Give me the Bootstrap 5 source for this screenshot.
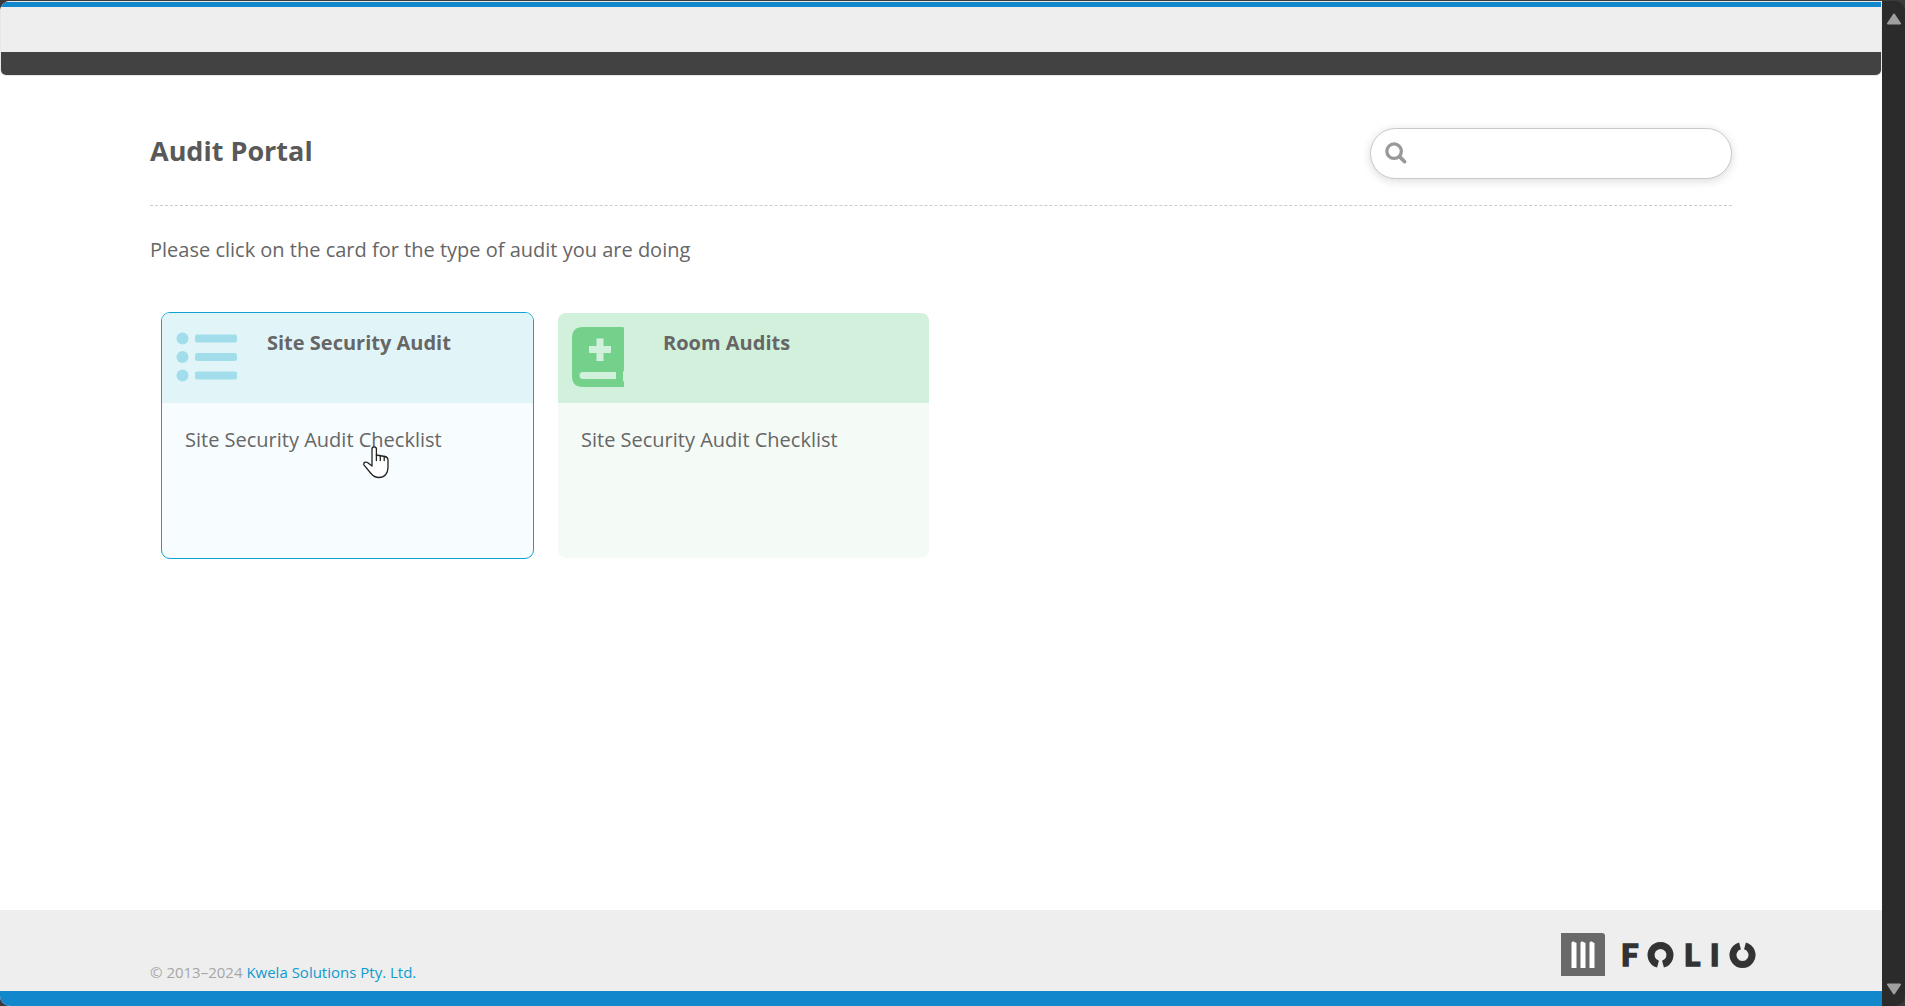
<!DOCTYPE html>
<html lang="en">
<head>
<meta charset="utf-8">
<meta name="viewport" content="width=device-width, initial-scale=1">
<title>Audit Portal</title>
<link href="https://cdn.jsdelivr.net/npm/bootstrap@5.3.0/dist/css/bootstrap.min.css" rel="stylesheet">
<style>
  body { font-family: "Open Sans", "Noto Sans", sans-serif; font-size: 20px; line-height: 30px; color: #666; background: #3a3a3c; }
  .app-window { border-radius: 10px; overflow: hidden; margin-top: 1px; min-height: calc(100vh - 1px); }
  .app-page { background: #fff; }
  .top-bar { border: 1px solid #e8e8e8; border-radius: 0 0 6px 6px; overflow: hidden; }
  .top-accent { height: 5px; background: #1287cc; }
  .top-brand { height: 45px; background: #eee; }
  .top-menu { height: 23px; background: #424242; }
  .gutter { padding-left: 150px; padding-right: 150px; }
  .portal-head { padding-top: 52px; padding-bottom: 26px; border-bottom: 1px dashed #ccc; }
  .portal-head h1 { font-size: 27px; line-height: 46px; color: #595959; }
  .search-pill { width: 362px; height: 51px; border: 1px solid #c8c8c8; border-radius: 26px; padding: 0 16px 2px 14px; box-shadow: 0 2px 10px rgba(0,0,0,.15); background: #fff; }
  .search-pill input { background: transparent; }
  .intro { margin: 29px 0 0; }
  .audit-grid { gap: 23px; padding: 47px 11px 0; }
  .audit-card { width: 373px; height: 247px; border: 1px solid transparent; border-radius: 9px; overflow: hidden; color: #666; background-clip: padding-box; }
  .audit-card.active { border-color: #0ea2d2; }
  .audit-head { height: 90px; padding: 14px 14px; }
  .audit-head h2 { font-size: 20px; line-height: 32px; color: #666; }
  .audit-icon { width: 91px; }
  .audit-text { padding: 22px 23px; }
  .tone-blue { background-color: #f7fcff; }
  .tone-blue .audit-head { background: #e1f5f9; }
  .tone-green { background-color: #f4fbf7; }
  .tone-green .audit-head { background: #d2f1dc; }
  .hand { position: absolute; left: 201px; top: 133px; }
  .foot { height: 81px; background: #eee; font-size: 15px; line-height: 22px; color: #a6a6a6; padding-bottom: 8px; }
  .foot a { color: #0d9bd0; text-decoration: none; }
  .foot-logo { margin-right: -24px; margin-bottom: 6px; }
  .foot-accent { height: 15px; background: #1287cc; }
  .scroll-track { width: 23px; background: #2b2b2b; padding: 12px 0 11px; }
</style>
<script src="https://cdn.jsdelivr.net/npm/bootstrap@5.3.0/dist/js/bootstrap.bundle.min.js"></script>
</head>
<body>
<div class="app-window d-flex">
  <div class="app-page d-flex flex-column flex-grow-1">
    <header class="top-bar">
      <div class="top-accent"></div>
      <div class="top-brand"></div>
      <div class="top-menu"></div>
    </header>
    <main class="gutter flex-grow-1">
      <div class="portal-head d-flex justify-content-between align-items-start">
        <h1 class="fw-bold mb-0">Audit Portal</h1>
        <label class="search-pill d-flex align-items-center gap-2">
          <svg width="24" height="24" viewBox="0 0 24 24" fill="none" stroke="#999" aria-hidden="true"><circle cx="10" cy="10" r="8" stroke-width="3.600"/><path d="M16 16 21.500 21.500" stroke-width="4" stroke-linecap="round"/></svg>
          <input type="search" class="form-control border-0 shadow-none p-0" aria-label="Search">
        </label>
      </div>
      <p class="intro">Please click on the card for the type of audit you are doing</p>
      <div class="audit-grid d-flex flex-wrap">
        <a href="#" class="audit-card active tone-blue text-decoration-none position-relative">
          <div class="audit-head d-flex">
            <div class="audit-icon flex-shrink-0">
              <svg width="62" height="62" viewBox="0 0 62 62" fill="#a2ddeb" aria-hidden="true"><circle cx="6.500" cy="11.500" r="6"/><circle cx="6.500" cy="30" r="6"/><circle cx="6.500" cy="48.500" r="6"/><rect x="19" y="7.500" width="42" height="8" rx="2"/><rect x="19" y="26" width="42" height="8" rx="2"/><rect x="19" y="44.500" width="42" height="8" rx="2"/></svg>
            </div>
            <h2 class="fw-bold mb-0">Site Security Audit</h2>
          </div>
          <div class="audit-text">Site Security Audit Checklist</div>
          <svg class="hand" width="26" height="33" viewBox="0 0 26 33" fill="#fff" stroke="#222" stroke-width="1.300" stroke-linejoin="round" stroke-linecap="round" aria-hidden="true"><path d="M9 20V3a2.200 2.200 0 0 1 4.400 0V9l8.500 1.500q3.100.7 3.100 3.500v7.500c0 6-3.500 10-9 10-3.500 0-6-1.500-8-4L.9 18.800C.2 16.500 2.500 15.500 4.500 16.500z"/><path fill="none" d="M13.400 9V14.500M17.300 9.700V14.500M21.200 10.500V14.500"/></svg>
        </a>
        <a href="#" class="audit-card tone-green text-decoration-none">
          <div class="audit-head d-flex">
            <div class="audit-icon flex-shrink-0">
              <svg width="54" height="62" viewBox="0 0 54 62" aria-hidden="true"><path fill="#74d18b" d="M11 0H51Q52 0 52 1.500V43.500L51 45V53.500L52 55V60H11Q0 60 0 49V11Q0 0 11 0Z"/><path fill="#d2f1dc" d="M24.500 11.500h7v7.500H39v7h-7.500V34h-7v-8H17v-7h7.500zM11 45H44v7H11a3.500 3.500 0 0 1 0-7z"/></svg>
            </div>
            <h2 class="fw-bold mb-0">Room Audits</h2>
          </div>
          <div class="audit-text">Site Security Audit Checklist</div>
        </a>
      </div>
    </main>
    <footer>
      <div class="foot gutter d-flex justify-content-between align-items-end">
        <span>© 2013–2024 <a href="#">Kwela Solutions Pty. Ltd.</a></span>
        <svg class="foot-logo" width="195" height="44" viewBox="0 0 195 44" role="img" aria-label="FOLIO">
          <path fill="#696969" d="M0 0H41q3 0 3 3V43H0z"/>
          <path fill="#fff" d="M10.500 10q0-2 2-1.500l3 1.500V35h-5zM19.500 10q0-2 2-1.500l3 1.500V35h-5zM28.500 10q0-2 2-1.500l3 1.500V35h-5z"/>
          <g fill="#333" stroke="#333" stroke-width="1.500" font-family="Lato, sans-serif" font-weight="900" font-size="31"><text x="60" y="33">F</text><text x="123" y="33">L</text><text x="149" y="33">I</text></g>
          <g fill="none" stroke="#333" stroke-width="7"><path d="M97 31.200A9.500 9.500 0 1 1 102 31.200"/><path d="M179 12.800A9.500 9.500 0 1 0 184 12.800"/></g>
        </svg>
      </div>
      <div class="foot-accent"></div>
    </footer>
  </div>
  <div class="scroll-track d-flex flex-column justify-content-between align-items-center flex-shrink-0" aria-hidden="true">
    <svg width="16" height="12" viewBox="0 0 16 12"><path fill="#9f9f9f" stroke="#9f9f9f" stroke-width="2" stroke-linejoin="round" d="M8 1.500 14 10.500H2z"/></svg>
    <svg width="16" height="12" viewBox="0 0 16 12"><path fill="#9f9f9f" stroke="#9f9f9f" stroke-width="2" stroke-linejoin="round" d="M8 10.500 14 1.500H2z"/></svg>
  </div>
</div>
</body>
</html>
